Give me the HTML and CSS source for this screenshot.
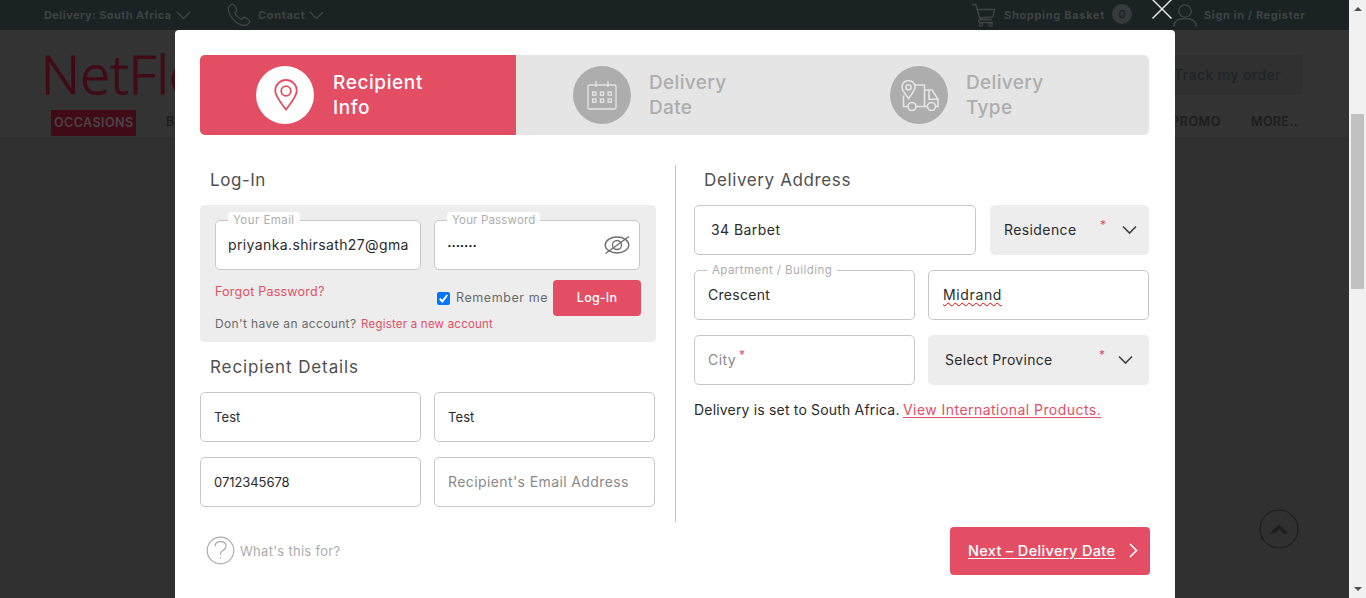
FILE: index.html
```html
<!DOCTYPE html>
<html lang="en">
<head>
<meta charset="utf-8">
<title>NetFlorist – Delivery details</title>
<link rel="stylesheet" href="styles.css">
</head>
<body>
<div class="window">
  <div class="page">
    <div class="topbar">
      <span class="top-link country">Delivery: South Africa</span>
      <svg class="chev" width="15" height="9" viewBox="0 0 15 9"><path d="M1 1l6.500 6.500L14 1"/></svg>
      <svg class="phone" width="24" height="24" viewBox="0 0 24 24"><path d="M4.300 1.500C2 2.800 1 4.200 1.300 6.500c.8 7.500 8.500 15.300 15.700 16 2.400.2 4.200-1 5.400-3.200.5-1 .2-1.900-.7-2.500l-3.300-2.200c-.9-.6-1.900-.4-2.600.4l-1.200 1.500c-3.300-1.600-5.600-3.900-7-7l1.500-1.200c.8-.7 1-1.700.4-2.600L7.200 2.200c-.7-1-1.700-1.300-2.900-.7z"/></svg>
      <span class="top-link contact">Contact</span>
      <svg class="chev" width="15" height="9" viewBox="0 0 15 9"><path d="M1 1l6.500 6.500L14 1"/></svg>
      <svg class="cart" width="24" height="24" viewBox="0 0 24 24"><path d="M0 1.500h3.800L8 16.500h12M5.200 6.500h17.500l-2 7.500L7.500 15M8 16.500c-2 .3-2 3 0 3h13"/><circle cx="9" cy="21.300" r="1.700"/><circle cx="18.500" cy="21.300" r="1.700"/></svg>
      <span class="top-link basket">Shopping Basket</span>
      <span class="count">0</span>
      <svg class="user" width="24" height="23" viewBox="0 0 24 23"><circle cx="12" cy="7" r="6.200"/><path d="M.8 22.500C1 17 5 14.500 12 14.500S23 17 23.200 22.500"/></svg>
      <span class="top-link signin">Sign in / Register</span>
    </div>
    <div class="header">
      <div class="brand-row">
        <span class="logo">NetFlo</span>
        <span class="track">Track my order</span>
      </div>
      <div class="nav">
        <span class="nav-active">OCCASIONS</span>
        <span class="nav-b">B</span>
        <span class="nav-promo">PROMO</span>
        <span class="nav-more">MORE..</span>
      </div>
    </div>
    <svg class="to-top" width="40" height="40" viewBox="0 0 40 40"><circle cx="20" cy="20" r="19"/><path d="M10.500 24.500L20 15.500l9.500 9h-5L20 20.300l-4.500 4.200z"/></svg>
  </div>
  <div class="scrollbar">
    <i class="arrow up"></i><i class="thumb"></i><i class="arrow down"></i>
  </div>
</div>

<svg class="close" width="22" height="20" viewBox="0 0 22 20"><path d="M1.500-.5l19 19M20.500-.5l-19 19"/></svg>

<div class="modal">
  <div class="steps">
    <div class="step active">
      <span class="disc"><svg width="24" height="32" viewBox="0 0 24 32"><path d="M12 30.500C8 25 1.200 17.500 1.200 11.800a10.800 10.800 0 0 1 21.600 0C22.800 17.500 16 25 12 30.500z"/><circle cx="12" cy="12" r="4.800"/></svg></span>
      <span class="step-name">Recipient<br>Info</span>
    </div>
    <div class="step">
      <span class="disc"><svg width="30" height="30" viewBox="0 0 30 30"><rect x="1" y="5" width="28" height="24" rx="1.500"/><path d="M9 1v6M21 1v6"/><g class="cells"><rect x="5.700" y="12" width="3.200" height="3.200"/><rect x="13.400" y="12" width="3.200" height="3.200"/><rect x="21.100" y="12" width="3.200" height="3.200"/><rect x="5.700" y="19" width="3.200" height="3.200"/><rect x="13.400" y="19" width="3.200" height="3.200"/><rect x="21.100" y="19" width="3.200" height="3.200"/></g></svg></span>
      <span class="step-name tight">Delivery<br>Date</span>
    </div>
    <div class="step">
      <span class="disc"><svg class="truck" width="38" height="31" viewBox="0 0 38 31"><path d="M7.500 18.500C5 14.500 1 11 1 7a6.500 6.500 0 0 1 13 0c0 4-4 7.500-6.500 11.500z"/><circle cx="7.500" cy="7.300" r="2.600"/><path d="M13.500 5H23.500V26.500H15M2.500 15.500V26.500H7M23.500 10H31l6 9v7.500h-2.500M26.500 26.500h-3M28 10v9.300h9"/><circle cx="11" cy="26.500" r="4"/><circle cx="30.500" cy="26.500" r="4"/></svg></span>
      <span class="step-name tight">Delivery<br>Type</span>
    </div>
  </div>

  <div class="columns">
    <div class="col left">
      <h2>Log-In</h2>
      <div class="login">
        <div class="pair">
          <div class="field email"><label class="float ls5">Your Email</label><span class="clip">priyanka.shirsath27@gma</span></div>
          <div class="field"><label class="float ls2">Your Password</label><span class="dots">•••••••</span>
            <svg class="eye" width="26" height="20" viewBox="0 0 26 20"><ellipse cx="13" cy="10" rx="11.800" ry="8"/><circle cx="13" cy="10" r="4.500"/><path d="M1.500 18.500L25 1.500"/></svg>
          </div>
        </div>
        <div class="login-row">
          <a class="forgot">Forgot Password?</a>
          <span class="check"><svg width="13" height="13" viewBox="0 0 13 13"><path d="M2.800 6.800l2.500 2.600L10.300 3"/></svg></span>
          <span class="remember">Remember me</span>
          <span class="login-btn">Log-In</span>
        </div>
        <div class="register"><span>Don't have an account?</span><a>Register a new account</a></div>
      </div>
      <h2 class="details">Recipient Details</h2>
      <div class="grid">
        <div class="field small">Test</div>
        <div class="field small">Test</div>
        <div class="field small phone-no">0712345678</div>
        <div class="field hint">Recipient's Email Address</div>
      </div>
      <div class="help"><svg width="29" height="29" viewBox="0 0 29 29"><circle cx="14.500" cy="14.500" r="13.300"/><path d="M9 10.500c0-3 2.300-4.800 5.500-4.800s5.500 1.800 5.500 4.500c0 4.300-5.500 3.800-5.500 7.800v1"/><path d="M14.500 21.500v1.500"/></svg><span>What's this for?</span></div>
    </div>
    <div class="col right">
      <h2 class="address">Delivery Address</h2>
      <div class="row street">
        <div class="field ls5 pad">34 Barbet</div>
        <div class="select"><span class="ls4">Residence</span><b class="req">*</b><svg class="chev" width="15" height="10" viewBox="0 0 15 10"><path d="M1 1.500l6.500 6.500L14 1.500"/></svg></div>
      </div>
      <div class="row">
        <div class="field ls3"><label class="float ls5">Apartment / Building</label>Crescent</div>
        <div class="field ls6 indent"><span class="misspelt">Midrand</span></div>
      </div>
      <div class="row">
        <div class="field hint city">City<b class="req">*</b></div>
        <div class="select province"><span class="ls3">Select Province</span><b class="req">*</b><svg class="chev" width="15" height="10" viewBox="0 0 15 10"><path d="M1 1.500l6.500 6.500L14 1.500"/></svg></div>
      </div>
      <p class="note"><span>Delivery is set to South Africa.</span><a>View International Products.</a></p>
      <a class="next"><span>Next – Delivery Date</span><svg width="9" height="15" viewBox="0 0 9 15"><path d="M1 1l6.500 6.500L1 14"/></svg></a>
    </div>
  </div>
</div>
</body>
</html>
```
FILE: styles.css
```css
* { box-sizing: border-box; }
body {
  margin: 0;
  height: 598px;
  overflow: hidden;
  font-family: Inter, "Open Sans", sans-serif;
  font-size: 14px;
  color: #2b2b2b;
}
svg { display: block; flex: none; fill: none; stroke: currentColor; stroke-width: 1.2; }
h2 { margin: 0; font-size: 17px; font-weight: 400; line-height: 20px; color: #4f4f4f; padding-left: 10px; letter-spacing: .55px; }

/* dimmed page */
.window { display: flex; height: 598px; }
.page { flex: 1; position: relative; background: #303030; }
.topbar { height: 30px; display: flex; align-items: center; background: #1b2224; color: #3e4243; }
.topbar svg { stroke: #404445; stroke-width: 1.3; }
.top-link { font-size: 11px; font-weight: 700; white-space: nowrap; }
.country { margin-left: 44px; width: 132px; letter-spacing: .42px; }
.contact { width: 51px; letter-spacing: .66px; }
.basket { width: 108px; letter-spacing: .69px; }
.signin { letter-spacing: .6px; }
.phone { margin: 0 7px 0 36px; }
.cart { margin: 0 8px 0 648px; }
.count { width: 20px; height: 20px; border-radius: 50%; background: #363a3b; color: #191d1e; font-size: 11px; font-weight: 500; line-height: 20px; text-align: center; margin-bottom: 2px; }
.user { margin: 0 7px 0 41px; }
.header { height: 107px; background: #333; padding-top: 25px; }
.brand-row { display: flex; height: 55px; }
.logo { width: 1119px; padding-left: 41px; font: 300 54px/36px "Open Sans", sans-serif; color: #400b17; -webkit-text-stroke: 1.2px #400b17; letter-spacing: .4px; }
.track { width: 143px; height: 40px; margin-left: 40px; padding-left: 15px; line-height: 40px; font-size: 14px; font-weight: 500; letter-spacing: .42px; color: #1d2527; background: #303030; border-radius: 3px; white-space: nowrap; }
.nav { display: flex; height: 26px; line-height: 25px; font-size: 12.5px; font-weight: 600; letter-spacing: .44px; color: #1d1d1d; }
.nav-active { width: 85px; margin-left: 51px; padding-left: 3px; background: #400b17; color: #4a4244; }
.nav-b { margin-left: 30px; width: 1005px; line-height: 24px; }
.nav-promo { width: 80px; line-height: 24px; letter-spacing: .6px; }
.nav-more { line-height: 24px; letter-spacing: .36px; }
.to-top { position: absolute; right: 50px; top: 509px; stroke: #1e1e1e; stroke-width: 1.2; }
.to-top path { fill: #1e1e1e; stroke: none; }
.scrollbar { width: 17px; background: #f1f1f1; display: flex; flex-direction: column; align-items: center; }
.arrow { border: 4px solid transparent; }
.up { border-bottom-color: #505050; border-top: 0; margin-top: 7px; }
.thumb { width: 13px; height: 175px; margin-top: 103px; background: #c1c1c1; }
.down { border-top-color: #505050; border-bottom: 0; margin: auto 0 7px; }
.close { position: absolute; left: 1151px; top: 0; color: #e4e4e4; stroke-width: 1.5; }

/* dialog */
.modal { position: absolute; left: 175px; top: 30px; width: 1000px; height: 568px; padding: 25px; background: #fff; border-radius: 4px 4px 0 0; }
.steps { display: grid; grid-template-columns: 316px 317px 316px; width: 949px; height: 80px; border-radius: 5px; overflow: hidden; background: #e5e5e5; }
.step { display: flex; align-items: center; padding-left: 57px; gap: 18px; color: #adadad; }
.step.active { background: #e44e65; color: #fff; padding-left: 56px; gap: 19px; }
.disc { width: 58px; height: 58px; border-radius: 50%; background: #adadad; color: #e5e5e5; display: grid; place-items: center; flex: none; }
.disc svg { stroke-width: 1.3; }
.active .disc { background: #fff; color: #e44e65; }
.active .disc svg { margin-left: 2px; stroke-width: 1.8; }
.disc .truck { margin-left: 2px; stroke-width: 1.6; }
.step-name { font-size: 19px; font-weight: 500; line-height: 25px; letter-spacing: .6px; }
.step-name.tight { letter-spacing: .35px; }

.columns { display: flex; padding-top: 30px; }
.col { flex: none; }
.left { width: 476px; height: 357px; border-right: 1px solid #c4c4c4; padding-top: 5px; }
.right { width: 456px; margin-left: 18px; padding-top: 5px; display: flex; flex-direction: column; }
.address { letter-spacing: .62px; }
.login { width: 456px; height: 137px; margin-top: 15px; padding: 15px; background: #ededed; border-radius: 5px; }
.pair { display: grid; grid-template-columns: 206px 206px; gap: 13px; }
.field { position: relative; height: 50px; border: 1px solid #c8c8c8; border-radius: 5px; background: #fff; display: flex; align-items: center; padding: 0 12px 1px 13px; white-space: nowrap; }
.email { padding: 0 10px 0 12px; }
.clip { letter-spacing: .38px; line-height: 22px; }
.float { position: absolute; left: 12px; top: -9px; padding: 0 5px; height: 16px; line-height: 16px; font-size: 11.5px; background: #fff; border-radius: 4px 4px 0 0; color: #adadad; }
.dots { font: 8px/10px "Liberation Sans", sans-serif; letter-spacing: 1.4px; color: #111; padding-top: 2px; }
.eye { position: absolute; right: 9px; top: 14px; color: #6d6d6d; stroke-width: 1.3; }
.login-row { display: flex; align-items: center; height: 36px; margin-top: 10px; font-size: 12.5px; color: #6a6a6a; white-space: nowrap; }
.forgot { width: 222px; color: #e44e65; letter-spacing: .23px; padding-bottom: 14px; }
.check { width: 13px; height: 13px; border-radius: 2px; background: #0075ff; color: #fff; margin-right: 6px; }
.check svg { stroke-width: 2; }
.remember { width: 97px; letter-spacing: .58px; padding-bottom: 1px; }
.login-btn { width: 88px; height: 36px; flex: none; border-radius: 4px; background: #e44e65; color: #fff; font-weight: 500; letter-spacing: .2px; line-height: 36px; text-align: center; }
.register { display: flex; font-size: 12px; line-height: 16px; color: #6a6a6a; }
.register span { width: 146px; letter-spacing: .36px; }
.register a { font-size: 11.5px; letter-spacing: .22px; color: #e44e65; }
.details { margin-top: 15px; letter-spacing: .89px; }
.grid { display: grid; grid-template-columns: 221px 221px; gap: 15px 13px; margin-top: 15px; }
.small { font-size: 13px; letter-spacing: .1px; padding-bottom: 0; }
.phone-no { letter-spacing: -.06px; }
.hint { color: #8a8a8a; letter-spacing: .4px; }
.help { display: flex; align-items: center; gap: 5px; margin: 29px 0 0 6px; font-size: 13px; letter-spacing: .28px; color: #acacac; }
.row { display: grid; grid-template-columns: 221px 221px; gap: 13px; margin-top: 15px; }
.street { grid-template-columns: 282px 159px; gap: 14px; }
.pad { padding-left: 16px; }
.indent { padding-left: 14px; }
.select { height: 50px; display: flex; align-items: center; border-radius: 5px; background: #ededed; padding: 0 12px 0 14px; }
.select span { flex: 1; padding-bottom: 1px; }
.select .chev { color: #444; stroke-width: 1.7; }
.province { padding: 0 16px 0 17px; }
.req { font-size: 12px; font-weight: 400; line-height: 12px; color: #e44e65; margin: 0 16px 11px 0; }
.province .req { margin-right: 13px; }
.city .req { margin: 0 0 10px 3px; }
.misspelt { text-decoration: underline wavy #e00 1px; text-underline-offset: 2px; text-decoration-skip-ink: none; }
.ls2 { letter-spacing: .16px; }
.ls3 { letter-spacing: .3px; }
.ls4 { letter-spacing: .4px; }
.ls5 { letter-spacing: .44px; }
.ls6 { letter-spacing: .63px; }
.note { display: flex; margin: 15px 0 0; line-height: 20px; white-space: nowrap; }
.note span { width: 209px; letter-spacing: .18px; }
.note a { color: #e44e65; text-decoration: underline; letter-spacing: .45px; text-underline-offset: 2px; }
.next { align-self: flex-end; margin: 107px 0 0; width: 200px; height: 48px; display: flex; align-items: center; justify-content: space-between; padding: 0 12px 1px 18px; border-radius: 4px; background: #e44e65; color: #fff; font-size: 14.5px; font-weight: 500; letter-spacing: .35px; white-space: nowrap; }
.next span { text-decoration: underline; text-underline-offset: 2px; }
.next svg { stroke-width: 1.6; }
```
